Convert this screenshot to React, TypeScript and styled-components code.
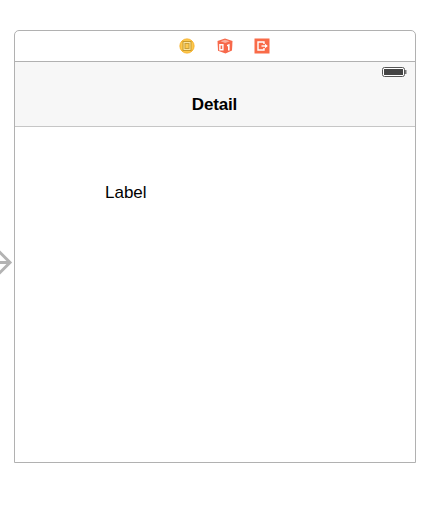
import React from "react";
import styled, { createGlobalStyle } from "styled-components";

const GlobalStyle = createGlobalStyle`
    html, body {
        margin: 0;
        padding: 0;
        background: #ffffff;
        font-family: "Liberation Sans", Arial, sans-serif;
    }
`;

const Page = styled.div`
    position: relative;
    width: 427px;
    height: 509px;
    padding: 30px 11px 0 14px;
    box-sizing: border-box;
    overflow: hidden;
`;

const Scene = styled.div`
    width: 402px;
    height: 433px;
    box-sizing: border-box;
    border: 1px solid #b1b1b1;
    border-radius: 5px 5px 0 0;
    display: flex;
    flex-direction: column;
`;

const Dock = styled.div`
    height: 31px;
    flex: none;
    box-sizing: border-box;
    border-bottom: 1px solid #b1b1b1;
    display: flex;
    align-items: center;
    justify-content: center;
    gap: 21.5px;
    padding: 0 0 0 19px;
`;

const DockIcon = styled.svg`
    width: 16px;
    height: 16px;
    flex: none;
    display: block;
`;

const NavBar = styled.div`
    height: 65px;
    flex: none;
    box-sizing: border-box;
    background: #f7f7f7;
    border-bottom: 1px solid #c6c6c6;
    display: flex;
    flex-direction: column;
`;

const StatusBar = styled.div`
    height: 20px;
    display: flex;
    justify-content: flex-end;
    align-items: center;
    padding: 0 8px 0 0;
`;

const Battery = styled.svg`
    width: 25px;
    height: 10px;
    display: block;
`;

const NavTitle = styled.div`
    flex: 1;
    display: flex;
    align-items: center;
    justify-content: center;
    padding: 1px 1px 0 0;
    font-size: 17px;
    font-weight: 700;
    letter-spacing: -0.15px;
    color: #000000;
`;

const Content = styled.div`
    flex: 1;
    padding: 56px 0 0 90px;
`;

const Label = styled.div`
    font-size: 17px;
    line-height: 20px;
    color: #000000;
`;

const EntryArrow = styled.svg`
    position: absolute;
    left: 0;
    top: 248px;
    width: 14px;
    height: 29px;
`;

const ObjectIcon = () =>
    <DockIcon viewBox="0 0 16 16">
        <circle cx="8" cy="8" r="7.1" fill="#fdc94f" stroke="#f7ad1c" strokeWidth="0.9" />
        <rect x="4" y="3.5" width="8" height="9" fill="#fbe3a0" stroke="#c89a2c" strokeWidth="1" />
        <rect x="6" y="5.5" width="4" height="5" fill="#fdc94f" stroke="#c9a03a" strokeWidth="1" />
    </DockIcon>

const CubeIcon = () =>
    <DockIcon viewBox="0 0 16 16">
        <path d="M8 0.5 L15.5 3 L15 12.5 L8.5 15.5 L1 12.8 L0.5 3 Z" fill="#f7684a" />
        <path d="M3.5 3.2 L8 1.8 L12.8 3.2 L8.2 5 Z" fill="#fbb09f" />
        <path d="M2.2 6 H6.6 V12.4 H2.2 Z M3.6 7.4 V11 H5.2 V7.4 Z" fill="#ffffff" fillRule="evenodd" />
        <path d="M10 7 L12.6 5.8 V12.6 H11 V8 L10 8.5 Z" fill="#ffffff" />
    </DockIcon>

const ExitIcon = () =>
    <DockIcon viewBox="0 0 16 16">
        <rect x="0.5" y="0.5" width="15" height="15" fill="#f96b48" />
        <path d="M10 6 V4 H4 V12 H10 V10" fill="none" stroke="#ffffff" strokeWidth="1.4" />
        <path d="M7.5 8 H12.5" stroke="#ffffff" strokeWidth="1.4" />
        <path d="M11 5.8 L13.8 8 L11 10.2 Z" fill="#ffffff" />
    </DockIcon>

export default function App(): JSX.Element {
    return (
        <Page>
            <GlobalStyle />
            <EntryArrow viewBox="0 0 14 29">
                <path d="M-2 14.5 H10" stroke="#b3b3b3" strokeWidth="3" fill="none" />
                <path d="M-1 3.5 L10 14.5 L-1 25.5" stroke="#b3b3b3" strokeWidth="3" fill="none" />
            </EntryArrow>
            <Scene>
                <Dock>
                    <ObjectIcon />
                    <CubeIcon />
                    <ExitIcon />
                </Dock>
                <NavBar>
                    <StatusBar>
                        <Battery viewBox="0 0 25 10">
                            <rect x="0.5" y="0.5" width="22" height="9" rx="2" fill="#ffffff" stroke="#555555" />
                            <rect x="2" y="2" width="19" height="6" fill="#444444" />
                            <rect x="23" y="3" width="1.5" height="4" fill="#777777" />
                        </Battery>
                    </StatusBar>
                    <NavTitle>Detail</NavTitle>
                </NavBar>
                <Content>
                    <Label>Label</Label>
                </Content>
            </Scene>
        </Page>
    );
}
